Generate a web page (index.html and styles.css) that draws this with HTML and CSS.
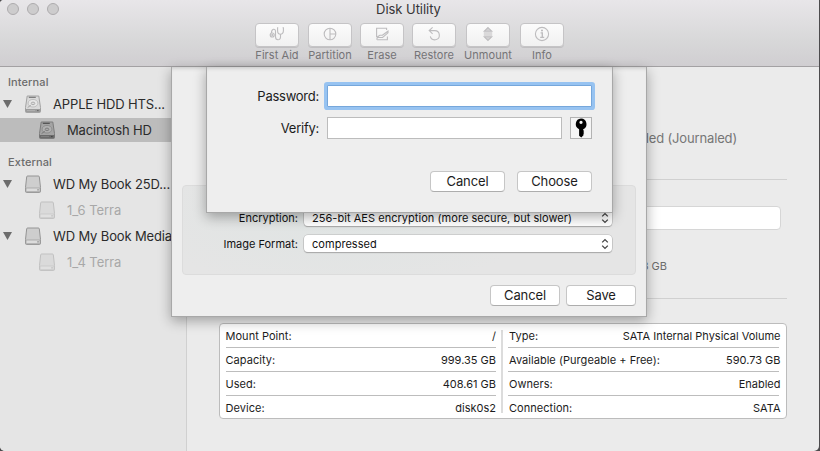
FILE: index.html
```html
<!DOCTYPE html>
<html lang="en">
<head>
<meta charset="utf-8">
<title>Disk Utility</title>
<link rel="stylesheet" href="styles.css">
</head>
<body>
<svg width="0" height="0" class="defs">
  <symbol id="hdd" viewBox="0 0 18 18">
    <path d="M3.2 1h11.6l1.7 11.5v4q0 .9-.9.9H2.4q-.9 0-.9-.9v-4z" fill="#dadada" stroke="#a2a2a2"/>
    <path d="M1.6 14h14.8v2.4q0 .9-.9.9h-13q-.9 0-.9-.9z" fill="#9c9c9c"/>
    <path d="M4.8 2.3h7" stroke="#686868"/>
    <ellipse cx="9" cy="8.2" rx="4.9" ry="3.8" fill="#e6e6e6" stroke="#b5b5b5" stroke-width=".8"/>
    <ellipse cx="9" cy="8.4" rx="1.8" ry="1.3" fill="#ddd" stroke="#a0a0a0" stroke-width=".8"/>
    <path d="M3.6 12.6l3.2-2.4" stroke="#a5a5a5"/>
    <path d="M3 15.6h8" stroke="#bbb" stroke-width=".7"/><path d="M13 15.6h1.6" stroke="#666"/>
  </symbol>
  <symbol id="hdd-dark" viewBox="0 0 18 18">
    <path d="M3.2 1h11.6l1.7 11.5v4q0 .9-.9.9H2.4q-.9 0-.9-.9v-4z" fill="#a4a4a4" stroke="#7c7c7c"/>
    <path d="M1.6 14h14.8v2.4q0 .9-.9.9h-13q-.9 0-.9-.9z" fill="#6b6b6b"/>
    <path d="M4.8 2.3h7" stroke="#444"/>
    <ellipse cx="9" cy="8.2" rx="4.9" ry="3.8" fill="#b0b0b0" stroke="#868686" stroke-width=".8"/>
    <ellipse cx="9" cy="8.4" rx="1.8" ry="1.3" fill="#aaa" stroke="#727272" stroke-width=".8"/>
    <path d="M3.6 12.6l3.2-2.4" stroke="#777"/>
    <path d="M3 15.6h8" stroke="#8c8c8c" stroke-width=".7"/><path d="M13 15.6h1.6" stroke="#444"/>
  </symbol>
  <symbol id="ext" viewBox="0 0 18 18">
    <path d="M3.6 1h10.8q.8 0 .9.8l1.2 10.7v3.9q0 1-1 1h-13q-1 0-1-1v-3.9L2.7 1.8q.1-.8.9-.8z" fill="#cecece" stroke="#949494"/>
    <path d="M2 13h14v2.8q0 .9-.9.9H2.9q-.9 0-.9-.9z" fill="#dcdcdc" stroke="#a2a2a2" stroke-width=".8"/>
    <path d="M13.3 14.9h1.5" stroke="#777"/>
  </symbol>
  <symbol id="updown" viewBox="0 0 8 12">
    <path d="M1.2 4.4L4 1.6l2.8 2.8M1.2 7.6L4 10.4l2.8-2.8" fill="none" stroke="#444" stroke-width="1.3"/>
  </symbol>
</svg>
<div class="window">
  <header class="titlebar">
    <div class="lights"><i></i><i></i><i></i></div>
    <h1>Disk Utility</h1>
    <div class="tools">
      <div class="tool"><button><svg viewBox="0 0 16 16"><circle cx="3.2" cy="9" r="2"/><circle cx="3.2" cy="9" r=".5"/><path d="M2.4 7C2.6 2.6 6.5 2 6.5 5.5v5.2c0 4 5 4 5 .3V8.4M9.2 1.8H8.6v3c0 4.6 5.8 4.6 5.8 0v-3h-.8"/></svg></button><span>First Aid</span></div>
      <div class="tool"><button><svg viewBox="0 0 16 16"><circle cx="8" cy="8" r="5.8"/><path d="M8 2v12M8 8h6"/></svg></button><span>Partition</span></div>
      <div class="tool"><button><svg viewBox="0 0 16 16"><path d="M12.6 4V2.2H2.6v8.6h2M3 13.8h10.4v-3.4"/><path d="M3.6 10.8l2.2-1.5h2.6L14 5.2v1.6L8.6 11.5H4M2.6 13.6l1-2.6"/></svg></button><span>Erase</span></div>
      <div class="tool"><button><svg viewBox="0 0 16 16"><path d="M3.2 4.6h5.6a4.6 4.6 0 1 1-4.5 5.8M6.6 1.4L3.2 4.6l3.4 3.2"/></svg></button><span>Restore</span></div>
      <div class="tool"><button><svg viewBox="0 0 16 16"><path d="M8 1.6l3.7 3.6H4.3zM8 14.4l3.7-3.6H4.3z" class="fillsoft"/><path d="M3.8 7h8.4M3.8 9h8.4"/></svg></button><span>Unmount</span></div>
      <div class="tool"><button><svg viewBox="0 0 16 16"><circle cx="8" cy="8" r="6.6"/><path d="M6.6 6.9h1.7v4.4M6.2 11.4h4" stroke-width="1.4"/><circle cx="8" cy="4.5" r=".5"/></svg></button><span>Info</span></div>
    </div>
  </header>
  <div class="body">
    <nav class="sidebar">
      <h2>Internal</h2>
      <div class="row"><b class="tri"></b><svg class="disk"><use href="#hdd"/></svg><span>APPLE HDD HTS...</span></div>
      <div class="row child selected"><svg class="disk"><use href="#hdd-dark"/></svg><span>Macintosh HD</span></div>
      <h2 class="second">External</h2>
      <div class="row"><b class="tri"></b><svg class="disk"><use href="#ext"/></svg><span>WD My Book 25D...</span></div>
      <div class="row child off"><svg class="disk"><use href="#ext"/></svg><span>1_6 Terra</span></div>
      <div class="row"><b class="tri"></b><svg class="disk"><use href="#ext"/></svg><span>WD My Book Media</span></div>
      <div class="row child off"><svg class="disk"><use href="#ext"/></svg><span>1_4 Terra</span></div>
    </nav>
    <main>
      <div class="volume"><span>ded (Journaled)</span></div>
      <div class="usage"><div class="bar"></div><span>3 GB</span></div>
      <div class="info">
        <dl>
          <div><dt>Mount Point:</dt><dd>/</dd></div>
          <div><dt>Capacity:</dt><dd>999.35 GB</dd></div>
          <div><dt>Used:</dt><dd>408.61 GB</dd></div>
          <div><dt>Device:</dt><dd>disk0s2</dd></div>
        </dl>
        <div class="divider"></div>
        <dl>
          <div><dt>Type:</dt><dd>SATA Internal Physical Volume</dd></div>
          <div><dt>Available (Purgeable + Free):</dt><dd>590.73 GB</dd></div>
          <div><dt>Owners:</dt><dd>Enabled</dd></div>
          <div><dt>Connection:</dt><dd>SATA</dd></div>
        </dl>
      </div>
    </main>
    <section class="sheet save">
      <div class="group">
        <div class="field"><label>Encryption:</label><div class="select"><span>256-bit AES encryption (more secure, but slower)</span><svg><use href="#updown"/></svg></div></div>
        <div class="field"><label>Image Format:</label><div class="select"><span>compressed</span><svg><use href="#updown"/></svg></div></div>
      </div>
      <div class="actions"><button>Cancel</button><button>Save</button></div>
    </section>
    <section class="sheet password">
      <div class="entry"><label>Password:</label><input class="focused" type="text"></div>
      <div class="entry"><label>Verify:</label><input type="text"><button class="key"><svg viewBox="0 0 14 20"><path fill-rule="evenodd" d="M7 .5a5.6 5.6 0 0 1 2.2 10.7v1l1 .9-1 1 1 1-1 1 .5.8-2.4 2.6-2.2-1.8v-6.5A5.6 5.6 0 0 1 7 .5zm0 2.3a1.6 1.6 0 1 0 .01 0z"/></svg></button></div>
      <div class="actions"><button>Cancel</button><button>Choose</button></div>
    </section>
  </div>
</div>
</body>
</html>
```
FILE: styles.css
```css
* { box-sizing: border-box; }
body { margin: 0; background: #4c4b4d; font: 13px/16px Inter, "Liberation Sans", sans-serif; color: #1c1c1c; overflow: hidden; }
h1, h2, dl, dt, dd { margin: 0; font: inherit; }
button { font: inherit; color: inherit; padding: 0; margin: 0; }
.defs { position: absolute; }
.window { width: 819px; height: 451px; display: flex; flex-direction: column; background: #ebebeb; border-radius: 4px 0 5px 5px; overflow: hidden; white-space: nowrap; }

.titlebar { height: 67px; flex: none; display: grid; grid-template: 23px 44px / 255px 1fr; background: linear-gradient(#e8e6e9, #d8d8d9 60%, #d0ced1); border-bottom: 1px solid #a3a1a3; }
.lights { display: flex; gap: 8px; padding: 3px 0 0 7px; }
.lights i { width: 12px; height: 12px; border-radius: 50%; background: #cdcccd; border: 1px solid #adabad; }
.titlebar h1 { width: 307px; text-align: center; padding-top: 1px; color: #363537; letter-spacing: -.05px; }
.tools { grid-column: 2; display: grid; grid-template-columns: 53px 52px 52px 54px 54px 44px; }
.tool { width: 44px; display: flex; flex-direction: column; align-items: center; font-size: 11px; letter-spacing: .05px; color: #757477; }
.tool button { width: 44px; height: 24px; flex: none; display: flex; align-items: center; justify-content: center; border: 1px solid #c5c4c6; border-radius: 4px; background: linear-gradient(#fcfcfc, #f1f1f1); box-shadow: 0 1px 0 #c0bfc1; }
.tool svg { width: 16px; height: 16px; margin-top: -2px; fill: none; stroke: #bdbcbe; stroke-width: 1.1; }
.tool .fillsoft { fill: #d4d3d5; }
.tool span { line-height: 17px; }

.body { position: relative; flex: 1; display: flex; }
.sidebar { width: 187px; padding-top: 6px; background: #e5e5e5; border-right: 1px solid #d0d0d0; }
.sidebar h2 { height: 18px; padding-left: 8px; line-height: 18px; font-size: 11px; font-weight: 500; color: #6c6c6c; letter-spacing: .1px; }
.sidebar .second { margin-top: 11px; }
.row { height: 26px; display: flex; align-items: center; padding-left: 3px; color: #2b2b2b; font-size: 13px; letter-spacing: -.14px; }
.tri { width: 9px; height: 8px; margin-right: 12px; background: #6d6d6d; clip-path: polygon(0 0, 100% 0, 50% 100%); }
.disk { width: 18px; height: 18px; margin-right: 11px; }
.child { padding-left: 38px; }
.selected { height: 24px; margin: 1px 0; background: #bcbcbc; }
.off { color: #a8a8a8; letter-spacing: -.05px; }
.off .disk { opacity: .45; }

main { flex: 1; padding: 64px 32px 0; }
.volume { height: 49px; margin-left: 6px; padding-right: 50px; border-bottom: 1px solid #d0d0d0; text-align: right; color: #767676; letter-spacing: -.15px; line-height: 15px; }
.usage { height: 119px; margin-left: 6px; padding: 26px 6px 0 0; border-bottom: 1px solid #d0d0d0; color: #6c6c6c; font-size: 11px; text-align: right; }
.bar { height: 24px; margin-bottom: 28px; background: #fff; border: 1px solid #d6d6d6; border-radius: 4px; }
.usage span { margin-right: 114px; }
.info { height: 96px; margin-top: 24px; padding: 0 7px 0 6px; display: flex; border: 1px solid #bcbcbc; border-radius: 4px; background: #fff; font-size: 11px; }
.info dl { width: 270px; }
.info dl + .divider + dl { width: 271px; }
.info dl div { height: 24px; display: flex; justify-content: space-between; line-height: 25px; border-bottom: 1px solid #bdbdbd; }
.info dl div:last-child { border: 0; }
.info dt { margin-left: -.5px; letter-spacing: .04px; }
.divider + dl dt { margin-left: 1px; }
.divider + dl dd { margin-right: -1.5px; }
.divider { width: 2px; height: 83px; margin: 6px 5px; background: #dcdcdc; }

.sheet { position: absolute; top: 0; background: #eee; border: 1px solid #a8a8a8; border-top: 0; box-shadow: 0 4px 12px rgba(0,0,0,.32), inset 0 4px 4px -3px rgba(0,0,0,.18); }
.save { left: 171px; width: 476px; height: 250px; padding: 118px 10px 0; }
.group { height: 90px; padding: 23px 23px 0 0; display: flex; flex-direction: column; gap: 9px; border: 1px solid #dcdcdc; border-radius: 4px; background: radial-gradient(ellipse 45% 90% at 35% 30%, #dfe4e3, #e5e5e5); font-size: 11px; color: #111; }
.field { height: 17px; display: flex; align-items: center; justify-content: flex-end; gap: 6px; }
.select { width: 308px; height: 17px; padding: 0 3px 0 8px; display: flex; align-items: center; justify-content: space-between; border-radius: 4px; background: #fff; box-shadow: 0 0 0 .6px #b8b8b8, 0 1px 1px #999; letter-spacing: .04px; }
.select svg { width: 8px; height: 12px; }
.actions { display: flex; justify-content: flex-end; gap: 6px; }
.actions button { height: 21px; width: 70px; border: 1px solid #c6c6c6; border-bottom-color: #adadad; border-radius: 4px; background: #fff; line-height: 19px; letter-spacing: -.1px; }
.save .actions { margin-top: 10px; }
.password { left: 206px; width: 407px; height: 146px; padding: 18px 20px 0 0; }
.entry { height: 22px; display: flex; margin-bottom: 10px; }
.entry label { width: 112px; margin-right: 8px; text-align: right; line-height: 23px; letter-spacing: -.25px; }
.entry input { flex: 1; min-width: 0; padding: 0 3px; font: inherit; border: 1px solid #bcbcbc; background: #fff; border-radius: 0; outline: 0; }
.entry .focused { border-color: #76a7db; box-shadow: 0 0 0 3px #97c3f1; border-radius: 1px; }
.key { width: 22px; height: 22px; margin-left: 8px; display: flex; align-items: center; justify-content: center; border: 1px solid #b3b3b3; background: #f5f5f5; }
.key svg { width: 14px; height: 20px; margin: -1px 1px 0 0; }
.password .actions { gap: 12px; margin-top: 32px; }
.password .actions button { width: 75px; }
```
